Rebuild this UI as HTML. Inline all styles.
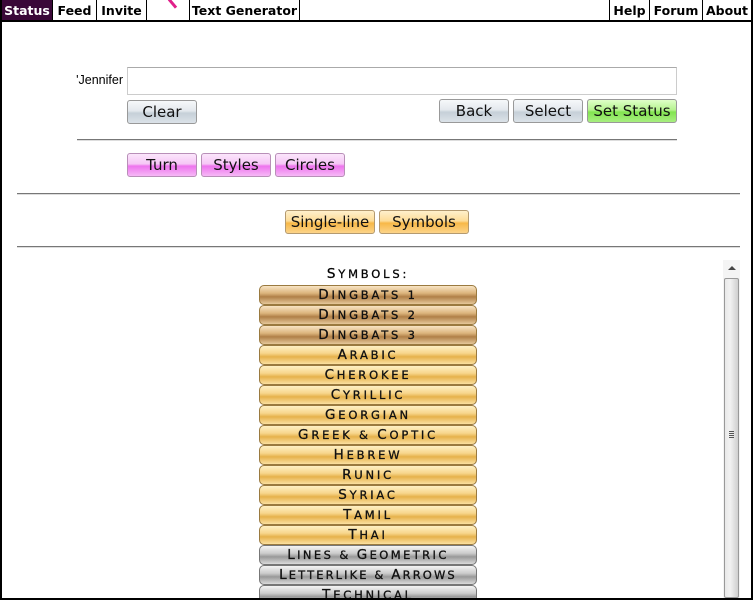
<!DOCTYPE html>
<html><head><meta charset="utf-8"><style>
*{margin:0;padding:0;box-sizing:border-box}
body{width:753px;height:600px;overflow:hidden;background:#000;font-family:"DejaVu Sans","Liberation Sans",sans-serif;position:relative}
#win{position:absolute;left:2px;top:0;width:749px;height:598px;background:#fff;overflow:hidden}
.nav{position:absolute;top:0;height:20px;border-right:1px solid #000;font-weight:bold;font-size:12.5px;line-height:21px;text-align:center;color:#000;background:#fff}
.navline{position:absolute;left:0;top:20px;width:749px;height:2px;background:#000}
.btn{position:absolute;height:24px;border:1px solid #999;border-radius:3px;font-size:15px;text-align:center;line-height:22px;color:#111}
.gray{background:linear-gradient(#f6f8fa,#e3e8ed 45%,#c6d0d8 55%,#dbe2e8)}
.green{background:linear-gradient(#dfffc8,#b6f390 45%,#82e450 55%,#a8ee80)}
.pink{background:linear-gradient(#fbe6fb,#f6c6f6 45%,#ee74ee 55%,#f6b8f6);border-color:#b88fb8}
.orange{background:linear-gradient(#fff0cc,#fddc98 45%,#f7b848 55%,#fcd489);border-color:#b49a70}
.hr{position:absolute;height:2px;background:#777;border-bottom:1px solid #ddd}
.sym{position:absolute;left:257px;width:218px;height:20px;border:1px solid #9a7a40;border-radius:5px;font-family:"DejaVu Sans",sans-serif;font-size:11.5px;letter-spacing:2.8px;text-align:center;line-height:18px;color:#111;white-space:nowrap;-webkit-text-stroke:0.3px #111}
.sym i,.hd i{font-style:normal;font-size:13.5px}
.brown{background:linear-gradient(#f8e4c4,#dcb47c 40%,#b08048 60%,#e6c89a)}
.gold{background:linear-gradient(#fff0c4,#f7d68c 40%,#e6b24c 60%,#fbe0a0)}
.silver{background:linear-gradient(#f4f4f4,#cccccc 40%,#999 60%,#dadada);border-color:#777}
</style></head><body><div id="win">
<div class="nav" style="left:0;width:51px;background:#3a0838;color:#fff">Status</div>
<div class="nav" style="left:51px;width:44px">Feed</div>
<div class="nav" style="left:95px;width:50px">Invite</div>
<div class="nav" style="left:145px;width:43px"><div style="position:absolute;left:24px;top:-2px;width:3px;height:11px;background:#e0208a;transform:rotate(-40deg)"></div></div>
<div class="nav" style="left:188px;width:110px">Text Generator</div>
<div class="nav" style="left:607px;width:41px;border-left:1px solid #000">Help</div>
<div class="nav" style="left:648px;width:53px">Forum</div>
<div class="nav" style="left:701px;width:48px;border-right:none">About</div>
<div class="navline"></div>

<div style="position:absolute;left:40px;width:81px;top:73px;text-align:right;font-family:'Liberation Sans',sans-serif;font-size:12.5px">'Jennifer</div>
<div style="position:absolute;left:125px;top:67px;width:550px;height:28px;border:1px solid #ccc;border-top-color:#aaa"></div>
<div class="btn gray" style="left:125px;top:100px;width:70px">Clear</div>
<div class="btn gray" style="left:437px;top:99px;width:70px">Back</div>
<div class="btn gray" style="left:511px;top:99px;width:70px">Select</div>
<div class="btn green" style="left:585px;top:99px;width:90px">Set Status</div>
<div class="hr" style="left:75px;top:139px;width:600px"></div>
<div class="btn pink" style="left:125px;top:153px;width:70px">Turn</div>
<div class="btn pink" style="left:199px;top:153px;width:70px">Styles</div>
<div class="btn pink" style="left:273px;top:153px;width:70px">Circles</div>
<div class="hr" style="left:15px;top:193px;width:723px"></div>
<div class="btn orange" style="left:283px;top:210px;width:90px">Single-line</div>
<div class="btn orange" style="left:377px;top:210px;width:90px">Symbols</div>
<div class="hr" style="left:15px;top:246px;width:723px"></div>

<div class="hd" style="position:absolute;left:257px;width:218px;top:266px;text-align:center;font-size:11.5px;letter-spacing:2.8px;-webkit-text-stroke:0.3px #111"><i>S</i>YMBOLS:</div>
<div class="sym brown" style="top:285px"><i>D</i>INGBATS 1</div>
<div class="sym brown" style="top:305px"><i>D</i>INGBATS 2</div>
<div class="sym brown" style="top:325px"><i>D</i>INGBATS 3</div>
<div class="sym gold" style="top:345px"><i>A</i>RABIC</div>
<div class="sym gold" style="top:365px"><i>C</i>HEROKEE</div>
<div class="sym gold" style="top:385px"><i>C</i>YRILLIC</div>
<div class="sym gold" style="top:405px"><i>G</i>EORGIAN</div>
<div class="sym gold" style="top:425px"><i>G</i>REEK &amp; <i>C</i>OPTIC</div>
<div class="sym gold" style="top:445px"><i>H</i>EBREW</div>
<div class="sym gold" style="top:465px"><i>R</i>UNIC</div>
<div class="sym gold" style="top:485px"><i>S</i>YRIAC</div>
<div class="sym gold" style="top:505px"><i>T</i>AMIL</div>
<div class="sym gold" style="top:525px"><i>T</i>HAI</div>
<div class="sym silver" style="top:545px;letter-spacing:2.4px"><i>L</i>INES &amp; <i>G</i>EOMETRIC</div>
<div class="sym silver" style="top:565px;letter-spacing:2.1px"><i>L</i>ETTERLIKE &amp; <i>A</i>RROWS</div>
<div class="sym silver" style="top:585px"><i>T</i>ECHNICAL</div>

<div style="position:absolute;left:721px;top:260px;width:17px;height:340px;background:#f4f4f4"></div>
<div style="position:absolute;left:726px;top:266px;width:0;height:0;border-left:4px solid transparent;border-right:4px solid transparent;border-bottom:4px solid #444"></div>
<div style="position:absolute;left:722px;top:278px;width:15px;height:320px;border:1px solid #999;border-radius:2px;background:linear-gradient(90deg,#e8e8e8,#f2f2f2 40%,#cfcfcf)"></div>
<div style="position:absolute;left:727px;top:431px;width:5px;height:1px;background:#555;box-shadow:0 2px 0 #555,0 4px 0 #555,0 6px 0 #555"></div>
</div></body></html>
